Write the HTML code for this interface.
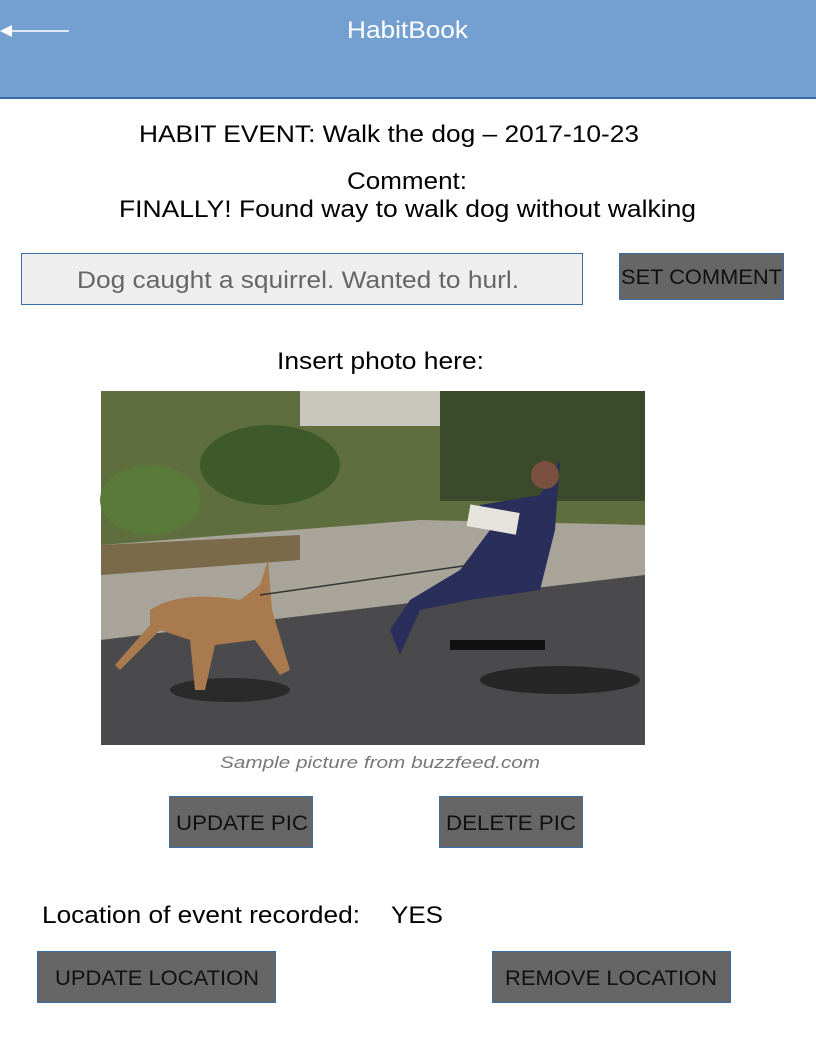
<!DOCTYPE html>
<html><head><meta charset="utf-8"><style>
html,body{margin:0;padding:0;background:#fff;width:816px;height:1056px;overflow:hidden}
svg{display:block}
</style></head><body>
<svg width="816" height="1056" viewBox="0 0 816 1056" xmlns="http://www.w3.org/2000/svg" font-family="Liberation Sans, sans-serif">
<rect x="0" y="0" width="816" height="98" fill="#73a0d0"/>
<rect x="0" y="97" width="816" height="2" fill="#3d6ca8"/>
<line x1="10" y1="31" x2="69" y2="31" stroke="#fff" stroke-width="1.5"/>
<polygon points="0,31 12,25 12,37" fill="#fff"/>
<text x="347" y="38" font-size="24" fill="#fff" textLength="121" lengthAdjust="spacingAndGlyphs">HabitBook</text>
<text x="139" y="142" font-size="24" textLength="500" lengthAdjust="spacingAndGlyphs">HABIT EVENT: Walk the dog – 2017-10-23</text>
<text x="347" y="189" font-size="24" textLength="120" lengthAdjust="spacingAndGlyphs">Comment:</text>
<text x="119" y="217" font-size="24" textLength="577" lengthAdjust="spacingAndGlyphs">FINALLY! Found way to walk dog without walking</text>
<rect x="21.5" y="253.5" width="561" height="51" fill="#eee" stroke="#3d6ca8"/>
<text x="77" y="288" font-size="24" fill="#666" textLength="442" lengthAdjust="spacingAndGlyphs">Dog caught a squirrel. Wanted to hurl.</text>
<rect x="619.5" y="253.5" width="164" height="46" fill="#666" stroke="#3d6ca8"/>
<text x="621" y="284" font-size="21" fill="#111" textLength="161" lengthAdjust="spacingAndGlyphs">SET COMMENT</text>
<text x="277" y="369" font-size="24" textLength="207" lengthAdjust="spacingAndGlyphs">Insert photo here:</text>
<!-- photo -->
<rect x="101" y="391" width="544" height="354" fill="#5c5e56"/>
<rect x="101" y="391" width="544" height="160" fill="#5f6e3e"/>
<rect x="300" y="391" width="140" height="35" fill="#c9c7bd"/>
<rect x="440" y="391" width="205" height="110" fill="#3b4a2a"/>
<ellipse cx="270" cy="465" rx="70" ry="40" fill="#3e5a2a"/>
<ellipse cx="150" cy="500" rx="50" ry="35" fill="#5a7a3a"/>
<polygon points="101,545 420,520 645,525 645,575 101,640" fill="#a8a49a"/>
<polygon points="101,640 645,575 645,745 101,745" fill="#4a4a4c"/>
<polygon points="101,545 300,535 300,560 101,575" fill="#7a6a4a"/>
<ellipse cx="560" cy="680" rx="80" ry="14" fill="#262626"/>
<ellipse cx="230" cy="690" rx="60" ry="12" fill="#2a2a2a"/>
<path d="M150 610 Q180 590 240 600 L260 585 L268 560 L272 610 L290 670 L280 675 L255 640 L215 645 L205 690 L195 690 L190 640 L160 630 L120 670 L115 665 L150 625 Z" fill="#a97a4e"/>
<path d="M480 505 L540 495 L560 460 L555 530 L540 590 L470 600 L420 610 L400 655 L390 630 L410 600 L460 570 L490 530 Z" fill="#2a2e5a"/>
<circle cx="545" cy="475" r="14" fill="#7a5040"/>
<rect x="468" y="508" width="50" height="22" fill="#e6e3dc" transform="rotate(10 490 520)"/>
<path d="M450 640 L545 640 L545 650 L450 650 Z" fill="#111"/>
<line x1="260" y1="595" x2="470" y2="565" stroke="#333" stroke-width="1.5"/>
<text x="220" y="768" font-size="17" font-style="italic" fill="#777" textLength="320" lengthAdjust="spacingAndGlyphs">Sample picture from buzzfeed.com</text>
<rect x="169.5" y="796.5" width="143" height="51" fill="#666" stroke="#3d6ca8"/>
<text x="176" y="830" font-size="21" fill="#111" textLength="132" lengthAdjust="spacingAndGlyphs">UPDATE PIC</text>
<rect x="439.5" y="796.5" width="143" height="51" fill="#666" stroke="#3d6ca8"/>
<text x="446" y="830" font-size="21" fill="#111" textLength="130" lengthAdjust="spacingAndGlyphs">DELETE PIC</text>
<text x="42" y="923" font-size="24" textLength="318" lengthAdjust="spacingAndGlyphs">Location of event recorded:</text>
<text x="391" y="923" font-size="24" textLength="52" lengthAdjust="spacingAndGlyphs">YES</text>
<rect x="37.5" y="951.5" width="238" height="51" fill="#666" stroke="#3d6ca8"/>
<text x="55" y="985" font-size="21" fill="#111" textLength="204" lengthAdjust="spacingAndGlyphs">UPDATE LOCATION</text>
<rect x="492.5" y="951.5" width="238" height="51" fill="#666" stroke="#3d6ca8"/>
<text x="505" y="985" font-size="21" fill="#111" textLength="212" lengthAdjust="spacingAndGlyphs">REMOVE LOCATION</text>
</svg>
</body></html>
